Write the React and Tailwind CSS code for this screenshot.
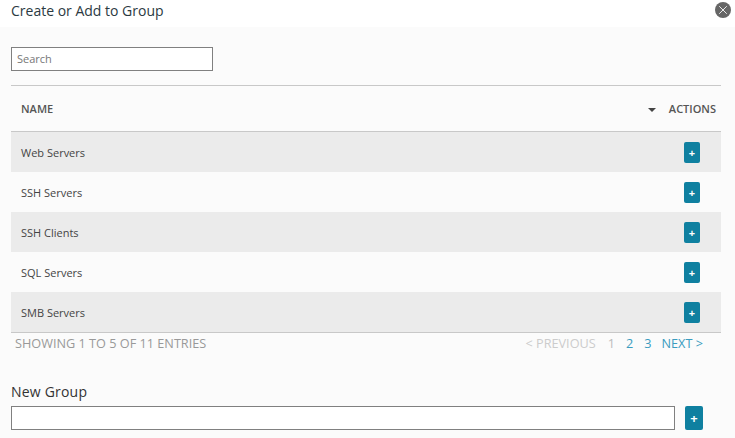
import { X } from "lucide-react";

const groups = ["Web Servers", "SSH Servers", "SSH Clients", "SQL Servers", "SMB Servers"];

function AddButton({ big }) {
  return (
    <button className={big
      ? "flex h-6 w-[18px] items-center justify-center rounded-[2px] bg-[#0f80a0] text-[13px] font-bold leading-none text-white"
      : "flex h-[21px] w-4 items-center justify-center rounded-[2px] bg-[#0f80a0] text-[11px] font-bold leading-none text-white"}>
      +
    </button>
  );
}

export default function App() {
  return (
    <div className="h-[438px] w-[735px] overflow-hidden bg-[#fbfbfb] font-['Open_Sans',sans-serif]">
      <div className="flex h-[27px] items-start justify-between bg-white pl-[11px] pr-1 pt-[1px]">
        <h1 className="text-[14px] leading-[20px] text-[#2b3a42]">Create or Add to Group</h1>
        <div className="mt-[1px] flex h-4 w-4 items-center justify-center rounded-full bg-[#666666]">
          <X className="size-[14px] text-white" strokeWidth={1.5} />
        </div>
      </div>

      <div className="pl-[11px] pr-[14px] pt-5">
        <input
          placeholder="Search"
          className="block h-6 w-[202px] border border-[#808080] bg-white px-[5px] pb-[2px] text-[11px] outline-none placeholder:text-[#777777]"
        />

        <div className="mt-[14px] flex h-[47px] items-center border-y border-[#c8c8c8] pl-[10px] pr-[5px] pt-[2px] text-[11px] font-semibold text-[#555555]">
          <span className="flex-1">NAME</span>
          <span className="mr-[13px] h-0 w-0 border-x-[4px] border-t-[4px] border-x-transparent border-t-[#444444]" />
          <span>ACTIONS</span>
        </div>

        <div className="border-b border-[#c8c8c8]">
          {groups.map((name, i) => (
            <div
              key={name}
              className={`flex h-10 items-center justify-between pl-[10px] pr-[21px] text-[11px] text-[#444444] ${i % 2 === 0 ? "bg-[#ebebeb]" : ""}`}
            >
              <span className="pt-[2px]">{name}</span>
              <AddButton />
            </div>
          ))}
        </div>

        <div className="flex h-[21px] items-center justify-between pl-1 pr-[18px] text-[12.7px] text-[#999999]">
          <span>SHOWING 1 TO 5 OF 11 ENTRIES</span>
          <div className="flex items-center">
            <span className="text-[#cccccc]">&lt; PREVIOUS</span>
            <span className="ml-3 text-[#bbbbbb]">1</span>
            <span className="ml-[11px] text-[#3a9cc0]">2</span>
            <span className="ml-[11px] text-[#3a9cc0]">3</span>
            <span className="ml-[10px] text-[#3a9cc0]">NEXT &gt;</span>
          </div>
        </div>

        <label className="mt-[28px] block text-[14px] leading-[20px] tracking-[0.2px] text-[#333333]">New Group</label>
        <div className="mt-1 flex items-center">
          <input className="block h-6 w-[664px] border border-[#808080] bg-white outline-none" />
          <div className="ml-[10px]">
            <AddButton big />
          </div>
        </div>
      </div>
    </div>
  );
}
